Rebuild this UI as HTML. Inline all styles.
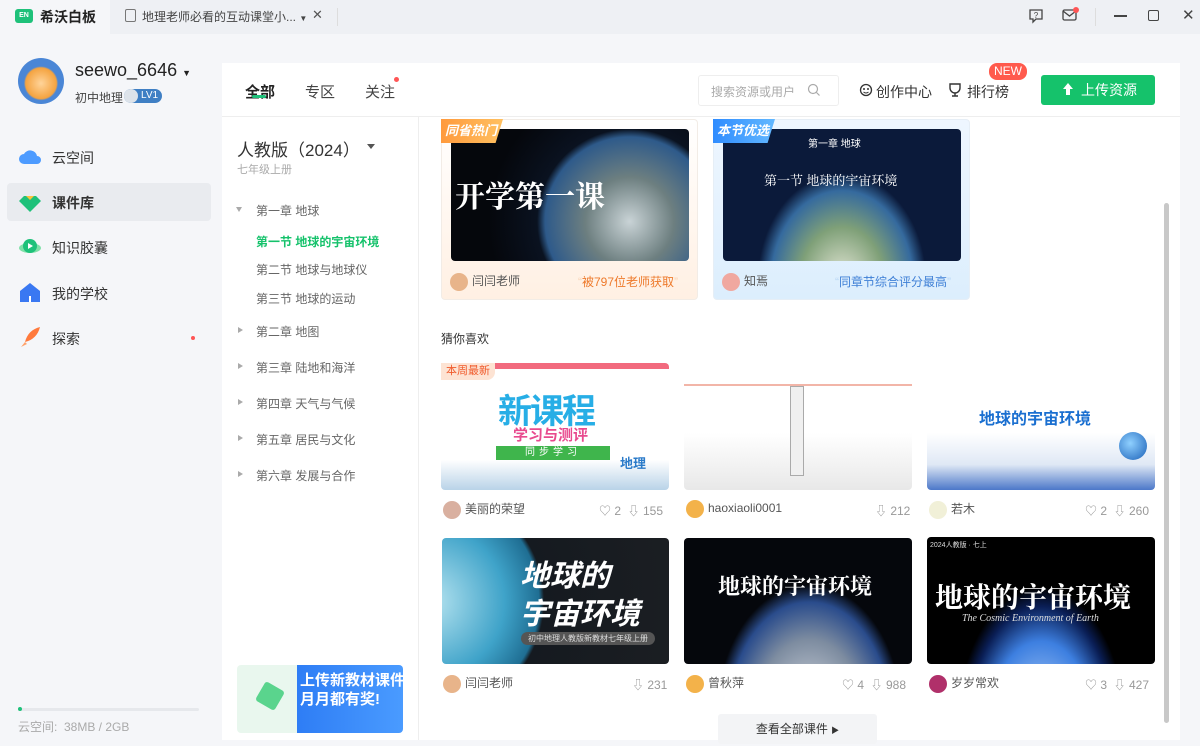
<!DOCTYPE html>
<html><head><meta charset="utf-8"><style>
*{margin:0;padding:0;box-sizing:border-box}
body{width:1200px;height:740px;overflow:hidden;background:#f5f6f9;font-family:"Liberation Sans","Noto Sans CJK SC",sans-serif;color:#333;position:relative}
.a{position:absolute}
.t{white-space:nowrap}
.earth{background:radial-gradient(circle at 75% 70%,#c9d3d6 0,#6d7f80 22%,#2e5a8a 42%,#0a1220 46%,#05070c 70%)}
.card{position:absolute;border-radius:4px;overflow:hidden}
.meta{position:absolute;font-size:12px;color:#555;white-space:nowrap}
.av{display:inline-block;width:18px;height:18px;border-radius:50%;vertical-align:middle;margin-right:4px}
.st{position:absolute;font-size:12px;color:#999;white-space:nowrap}
.ch{position:absolute;left:256px;font-size:12px;color:#666;white-space:nowrap}
.ar{position:absolute;left:238px;width:0;height:0;border-top:3px solid transparent;border-bottom:3px solid transparent;border-left:5px solid #aaa}
.nav{position:absolute;left:52px;font-size:14px;color:#333}
.bd{white-space:nowrap}
</style></head><body>
<div class="a" style="left:0;top:0;width:1200px;height:34px;background:#eef0f4"></div>
<div class="a" style="left:0;top:0;width:110px;height:34px;background:#f5f6f9"></div>
<div class="a" style="left:15px;top:9px;width:18px;height:14px;background:#1ec17a;border-radius:3px;color:#fff;font-size:7px;font-weight:bold;text-align:center;line-height:14px">EN</div>
<div class="a t" style="left:40px;top:7px;font-size:14px;color:#222;font-weight:bold">希沃白板</div>
<div class="a" style="left:125px;top:9px;width:11px;height:13px;border:1px solid #777;border-radius:2px"></div>
<div class="a t" style="left:142px;top:8px;font-size:12px;color:#444">地理老师必看的互动课堂小... <span style="font-size:8px">▼</span></div>
<div class="a t" style="left:312px;top:7px;font-size:13px;color:#555">✕</div>
<div class="a" style="left:337px;top:8px;width:1px;height:18px;background:#ddd"></div>
<svg class="a" style="left:1028px;top:8px" width="16" height="16"><path d="M2 2h12v9H8l-3 3v-3H2z" fill="none" stroke="#444" stroke-width="1.3"/><text x="8" y="10" font-size="8" text-anchor="middle" fill="#444" font-family="Liberation Sans">?</text></svg>
<svg class="a" style="left:1062px;top:6px" width="18" height="18"><rect x="1" y="4" width="13" height="10" rx="1.5" fill="none" stroke="#444" stroke-width="1.3"/><path d="M1 5l6.5 5 6.5-5" fill="none" stroke="#444" stroke-width="1.3"/><circle cx="14" cy="4" r="3" fill="#f55"/></svg>
<div class="a" style="left:1095px;top:8px;width:1px;height:18px;background:#ddd"></div>
<div class="a" style="left:1114px;top:15px;width:13px;height:1.5px;background:#444"></div>
<div class="a" style="left:1148px;top:10px;width:11px;height:11px;border:1.5px solid #444;border-radius:2px"></div>
<div class="a t" style="left:1182px;top:6px;font-size:15px;color:#444">✕</div>

<div class="a" style="left:18px;top:58px;width:46px;height:46px;border-radius:50%;background:radial-gradient(circle at 50% 55%,#ffd49a 0,#f4a340 45%,#4a86d6 50%)"></div>
<div class="a t" style="left:75px;top:60px;font-size:18px;color:#222">seewo_6646 <span style="font-size:9px">▼</span></div>
<div class="a t" style="left:75px;top:89px;font-size:12px;color:#444">初中地理</div>
<div class="a t" style="left:124px;top:89px;width:38px;height:14px;border-radius:7px;background:#3f7fc4;color:#fff;font-size:10px;line-height:14px;padding-left:17px">LV1</div>
<div class="a" style="left:124px;top:89px;width:14px;height:14px;border-radius:50%;background:#dde3ea"></div>
<svg class="a" style="left:18px;top:146px" width="24" height="20"><path d="M6 18a5 5 0 010-10 7 7 0 0113 2 4 4 0 010 8z" fill="#4d9bff"/></svg>
<div class="nav" style="top:148px">云空间</div>
<div class="a" style="left:7px;top:183px;width:204px;height:38px;background:#e9ebef;border-radius:4px"></div>
<svg class="a" style="left:18px;top:191px" width="24" height="22"><path d="M12 21L1 10l5-5h12l5 5z" fill="#1ec17a"/><path d="M8 5h8l-4 4z" fill="#ffc23b"/></svg>
<div class="nav" style="top:193px;font-weight:bold">课件库</div>
<svg class="a" style="left:18px;top:235px" width="24" height="24"><ellipse cx="12" cy="13" rx="11" ry="5" fill="#7fe0a8"/><circle cx="12" cy="11" r="7" fill="#1ec17a"/><path d="M10 8l5 3-5 3z" fill="#fff"/></svg>
<div class="nav" style="top:238px">知识胶囊</div>
<svg class="a" style="left:19px;top:281px" width="22" height="22"><path d="M1 10L11 2l10 8v11H1z" fill="#3a78f2"/><rect x="10" y="15" width="2" height="6" fill="#fff"/></svg>
<div class="nav" style="top:284px">我的学校</div>
<svg class="a" style="left:19px;top:326px" width="22" height="22"><path d="M6 16C8 8 13 3 21 1 19 9 14 14 6 16z" fill="#ff7a3d"/><path d="M2 21l4-5 2 2z" fill="#ffa26b"/></svg>
<div class="nav" style="top:329px">探索</div>
<div class="a" style="left:191px;top:336px;width:4px;height:4px;border-radius:50%;background:#f55"></div>
<div class="a" style="left:18px;top:708px;width:181px;height:3px;background:#e6e8ec;border-radius:2px"></div>
<div class="a" style="left:18px;top:707px;width:4px;height:4px;background:#1ec17a;border-radius:50%"></div>
<div class="a t" style="left:18px;top:718px;font-size:12px;color:#aaa">云空间:&nbsp;&nbsp;38MB / 2GB</div>

<div class="a" style="left:222px;top:63px;width:958px;height:677px;background:#fff"></div>
<div class="a" style="left:222px;top:116px;width:958px;height:1px;background:#eee"></div>
<div class="a" style="left:418px;top:117px;width:1px;height:623px;background:#eee"></div>
<div class="a t" style="left:245px;top:81px;font-size:15px;font-weight:bold;color:#222">全部</div>
<div class="a" style="left:252px;top:95px;width:14px;height:3px;background:#1ec17a;border-radius:2px"></div>
<div class="a t" style="left:305px;top:81px;font-size:15px;color:#444">专区</div>
<div class="a t" style="left:365px;top:81px;font-size:15px;color:#444">关注</div>
<div class="a" style="left:394px;top:77px;width:5px;height:5px;border-radius:50%;background:#f55"></div>
<div class="a" style="left:698px;top:75px;width:141px;height:31px;border:1px solid #eee;border-radius:3px"></div>
<div class="a t" style="left:711px;top:83px;font-size:12px;color:#aaa">搜索资源或用户</div>
<svg class="a" style="left:807px;top:83px" width="14" height="14"><circle cx="6" cy="6" r="4.5" fill="none" stroke="#aaa" stroke-width="1.2"/><path d="M9.5 9.5l3 3" stroke="#aaa" stroke-width="1.2"/></svg>
<svg class="a" style="left:859px;top:83px" width="14" height="14"><circle cx="7" cy="7" r="5.5" fill="none" stroke="#333" stroke-width="1.3"/><circle cx="5" cy="6" r="1" fill="#333"/><circle cx="9" cy="6" r="1" fill="#333"/><path d="M4.5 9q2.5 2 5 0" fill="none" stroke="#333"/></svg>
<div class="a t" style="left:876px;top:82px;font-size:14px;color:#333">创作中心</div>
<svg class="a" style="left:948px;top:82px" width="14" height="15"><path d="M2 2h10v4a5 5 0 01-10 0z" fill="none" stroke="#333" stroke-width="1.4"/><path d="M7 11v3M4 14h6" stroke="#333" stroke-width="1.4"/></svg>
<div class="a t" style="left:967px;top:82px;font-size:14px;color:#333">排行榜</div>
<div class="a t" style="left:989px;top:63px;height:17px;padding:0 5px;border-radius:8px;background:#ff5a4d;color:#fff;font-size:12px;line-height:17px">NEW</div>
<div class="a t" style="left:1041px;top:75px;width:114px;height:30px;background:#15c26b;border-radius:3px;color:#fff;font-size:14px;line-height:30px;padding-left:40px">上传资源</div>
<svg class="a" style="left:1062px;top:82px" width="12" height="14"><path d="M6 1L1 7h3v6h4V7h3z" fill="#fff"/></svg>

<div class="a t" style="left:237px;top:136px;font-size:17px;color:#333">人教版（2024）</div>
<div class="a" style="left:367px;top:144px;border-left:4px solid transparent;border-right:4px solid transparent;border-top:5px solid #555"></div>
<div class="a t" style="left:237px;top:161px;font-size:11px;color:#aaa">七年级上册</div>
<div class="a" style="left:236px;top:207px;border-left:3px solid transparent;border-right:3px solid transparent;border-top:5px solid #aaa"></div>
<div class="ch" style="top:202px">第一章 地球</div>
<div class="ch" style="top:233px;color:#15c26b;font-weight:bold">第一节 地球的宇宙环境</div>
<div class="ch" style="top:261px">第二节 地球与地球仪</div>
<div class="ch" style="top:290px">第三节 地球的运动</div>
<div class="ar" style="top:327px"></div><div class="ch" style="top:323px">第二章 地图</div>
<div class="ar" style="top:363px"></div><div class="ch" style="top:359px">第三章 陆地和海洋</div>
<div class="ar" style="top:399px"></div><div class="ch" style="top:395px">第四章 天气与气候</div>
<div class="ar" style="top:435px"></div><div class="ch" style="top:431px">第五章 居民与文化</div>
<div class="ar" style="top:471px"></div><div class="ch" style="top:467px">第六章 发展与合作</div>
<div class="a" style="left:237px;top:665px;width:166px;height:68px;border-radius:4px;overflow:hidden;background:linear-gradient(90deg,#e9f7ee 0,#e9f7ee 36%,#2e7df5 36%,#4a9bff 100%)"></div>
<div class="a t" style="left:300px;top:671px;font-size:15px;font-weight:bold;color:#fff;line-height:19px;width:103px;overflow:hidden">上传新教材课件<br>月月都有奖!</div>
<div class="a" style="left:259px;top:685px;width:22px;height:22px;background:#5ad48d;transform:rotate(30deg);border-radius:3px"></div>

<div class="card" style="left:441px;top:119px;width:257px;height:181px;background:linear-gradient(#fff,#fff0e3);border:1px solid #f2ece6"></div>
<div class="card earth" style="left:451px;top:129px;width:238px;height:132px"></div>
<div class="a t" style="left:455px;top:172px;font-size:30px;font-weight:bold;color:#fff;font-family:'Noto Serif CJK SC',serif">开学第一课</div>
<div class="a bd" style="left:441px;top:119px;width:62px;height:24px;background:linear-gradient(90deg,#ff9a3d,#ffc060);clip-path:polygon(0 0,100% 0,88% 100%,0 100%);color:#fff;font-size:13px;font-weight:bold;font-style:italic;line-height:24px;padding-left:4px">同省热门</div>
<div class="meta" style="left:450px;top:272px"><span class="av" style="background:#e8b48a"></span>闫闫老师</div>
<div class="meta" style="left:578px;top:273px;color:#ee7a2b"><span style="color:#f9d3b3">“</span>被797位老师获取<span style="color:#f9d3b3">”</span></div>
<div class="card" style="left:713px;top:119px;width:257px;height:181px;background:linear-gradient(#eef6ff,#dceefd);border:1px solid #e6eef6"></div>
<div class="card" style="left:723px;top:129px;width:238px;height:132px;background:radial-gradient(ellipse at 50% 115%,#e6e8d8 0,#7fa078 25%,#356a9e 42%,#0b1a3a 50%),linear-gradient(#3d2a8a,#0b1a3a)"></div>
<div class="a t" style="left:808px;top:135px;font-size:10px;color:#fff">第一章 地球</div>
<div class="a t" style="left:764px;top:170px;font-size:13px;color:#fff;font-family:'Noto Serif CJK SC',serif">第一节 地球的宇宙环境</div>
<div class="a bd" style="left:713px;top:119px;width:62px;height:24px;background:linear-gradient(90deg,#2f8cff,#63b8ff);clip-path:polygon(0 0,100% 0,88% 100%,0 100%);color:#fff;font-size:13px;font-weight:bold;font-style:italic;line-height:24px;padding-left:4px">本节优选</div>
<div class="meta" style="left:722px;top:272px"><span class="av" style="background:#f0a8a0"></span>知焉</div>
<div class="meta" style="left:835px;top:273px;color:#3e7fd6"><span style="color:#b9d7f5">“</span>同章节综合评分最高<span style="color:#b9d7f5">”</span></div>

<div class="a t" style="left:441px;top:330px;font-size:12px;color:#333">猜你喜欢</div>

<div class="card" style="left:441px;top:363px;width:228px;height:127px;background:linear-gradient(#fff 0,#fff 75%,#b9d3e8 100%);border-top:6px solid #f26a7e"></div>
<div class="a t" style="left:498px;top:384px;font-size:34px;font-weight:bold;color:#27aee6;letter-spacing:-2px">新课程</div>
<div class="a t" style="left:513px;top:424px;font-size:15px;font-weight:bold;color:#e84a8e">学习与测评</div>
<div class="a t" style="left:496px;top:446px;width:114px;height:14px;background:#3fb54c;color:#fff;font-size:10px;text-align:center;line-height:14px;letter-spacing:4px">同步学习</div>
<div class="a t" style="left:620px;top:453px;font-size:13px;font-weight:bold;color:#2b7bc9">地理</div>
<div class="a bd" style="left:441px;top:363px;width:54px;height:17px;background:#fde3d3;border-radius:0 0 8px 0;color:#f05a2b;font-size:11px;line-height:17px;padding-left:5px">本周最新</div>
<div class="card" style="left:684px;top:363px;width:228px;height:127px;background:linear-gradient(#fff 0,#fff 55%,#e8e8e8 100%)"></div>
<div class="a" style="left:684px;top:384px;width:228px;height:2px;background:#f2b5a8"></div>
<div class="a" style="left:790px;top:386px;width:14px;height:90px;border:1px solid #aaa;background:#f0f0f0"></div>
<div class="card" style="left:927px;top:363px;width:228px;height:127px;background:linear-gradient(#fff 0,#fff 55%,#dfe8f5 80%,#4c78c9 100%)"></div>
<div class="a t" style="left:979px;top:405px;font-size:16px;font-weight:bold;color:#1a6fd0">地球的宇宙环境</div>
<div class="a" style="left:1119px;top:432px;width:28px;height:28px;border-radius:50%;background:radial-gradient(circle at 40% 40%,#8fd0ff,#1a60b8)"></div>

<div class="meta" style="left:443px;top:500px"><span class="av" style="background:#d9b0a0"></span>美丽的荣望</div>
<div class="st" style="left:599px;top:502px">♡ 2 &nbsp;⇩ 155</div>
<div class="meta" style="left:686px;top:500px"><span class="av" style="background:#f3b24a"></span>haoxiaoli0001</div>
<div class="st" style="left:875px;top:502px">⇩ 212</div>
<div class="meta" style="left:929px;top:500px"><span class="av" style="background:#f1f0d8"></span>若木</div>
<div class="st" style="left:1085px;top:502px">♡ 2 &nbsp;⇩ 260</div>

<div class="card" style="left:442px;top:538px;width:227px;height:126px;background:radial-gradient(circle at -5% 50%,#b7e4f0 0,#3fa3c9 30%,#1f6e93 44%,#151a20 46%,#1b1e22 100%)"></div>
<div class="a t" style="left:520px;top:558px;font-size:30px;font-weight:bold;color:#fff;line-height:38px;font-style:italic">地球的<br>宇宙环境</div>
<div class="a t" style="left:521px;top:632px;width:134px;height:13px;border-radius:7px;background:#555;color:#ddd;font-size:8px;text-align:center;line-height:13px">初中地理人教版新教材七年级上册</div>
<div class="card" style="left:684px;top:538px;width:228px;height:126px;background:radial-gradient(ellipse at 55% 140%,#dde0e6 0,#7d8ca0 30%,#2a4c8c 45%,#05070c 52%)"></div>
<div class="a t" style="left:718px;top:570px;font-size:22px;font-weight:bold;color:#fff;font-family:'Noto Serif CJK SC',serif">地球的宇宙环境</div>
<div class="card" style="left:927px;top:537px;width:228px;height:127px;background:radial-gradient(ellipse at 50% 150%,#cfe4ff 0,#3d7fe0 32%,#0a1e55 45%,#000 52%)"></div>
<div class="a t" style="left:935px;top:576px;font-size:28px;font-weight:bold;color:#fff;font-family:'Noto Serif CJK SC',serif">地球的宇宙环境</div>
<div class="a t" style="left:962px;top:613px;font-size:10px;color:#ddd;font-style:italic;font-family:'Liberation Serif',serif">The Cosmic Environment of Earth</div>
<div class="a t" style="left:930px;top:540px;font-size:7px;color:#ddd">2024人教版 · 七上</div>

<div class="meta" style="left:443px;top:674px"><span class="av" style="background:#e8b48a"></span>闫闫老师</div>
<div class="st" style="left:632px;top:676px">⇩ 231</div>
<div class="meta" style="left:686px;top:674px"><span class="av" style="background:#f3b24a"></span>曾秋萍</div>
<div class="st" style="left:842px;top:676px">♡ 4 &nbsp;⇩ 988</div>
<div class="meta" style="left:929px;top:674px"><span class="av" style="background:#b0306a"></span>岁岁常欢</div>
<div class="st" style="left:1085px;top:676px">♡ 3 &nbsp;⇩ 427</div>

<div class="a t" style="left:718px;top:714px;width:159px;height:30px;background:#f3f4f6;border-radius:3px;font-size:12px;color:#333;text-align:center;line-height:30px">查看全部课件 <span style="font-size:8px">▶</span></div>
<div class="a" style="left:1164px;top:203px;width:5px;height:520px;background:#c8c8c8;border-radius:3px"></div>
</body></html>
